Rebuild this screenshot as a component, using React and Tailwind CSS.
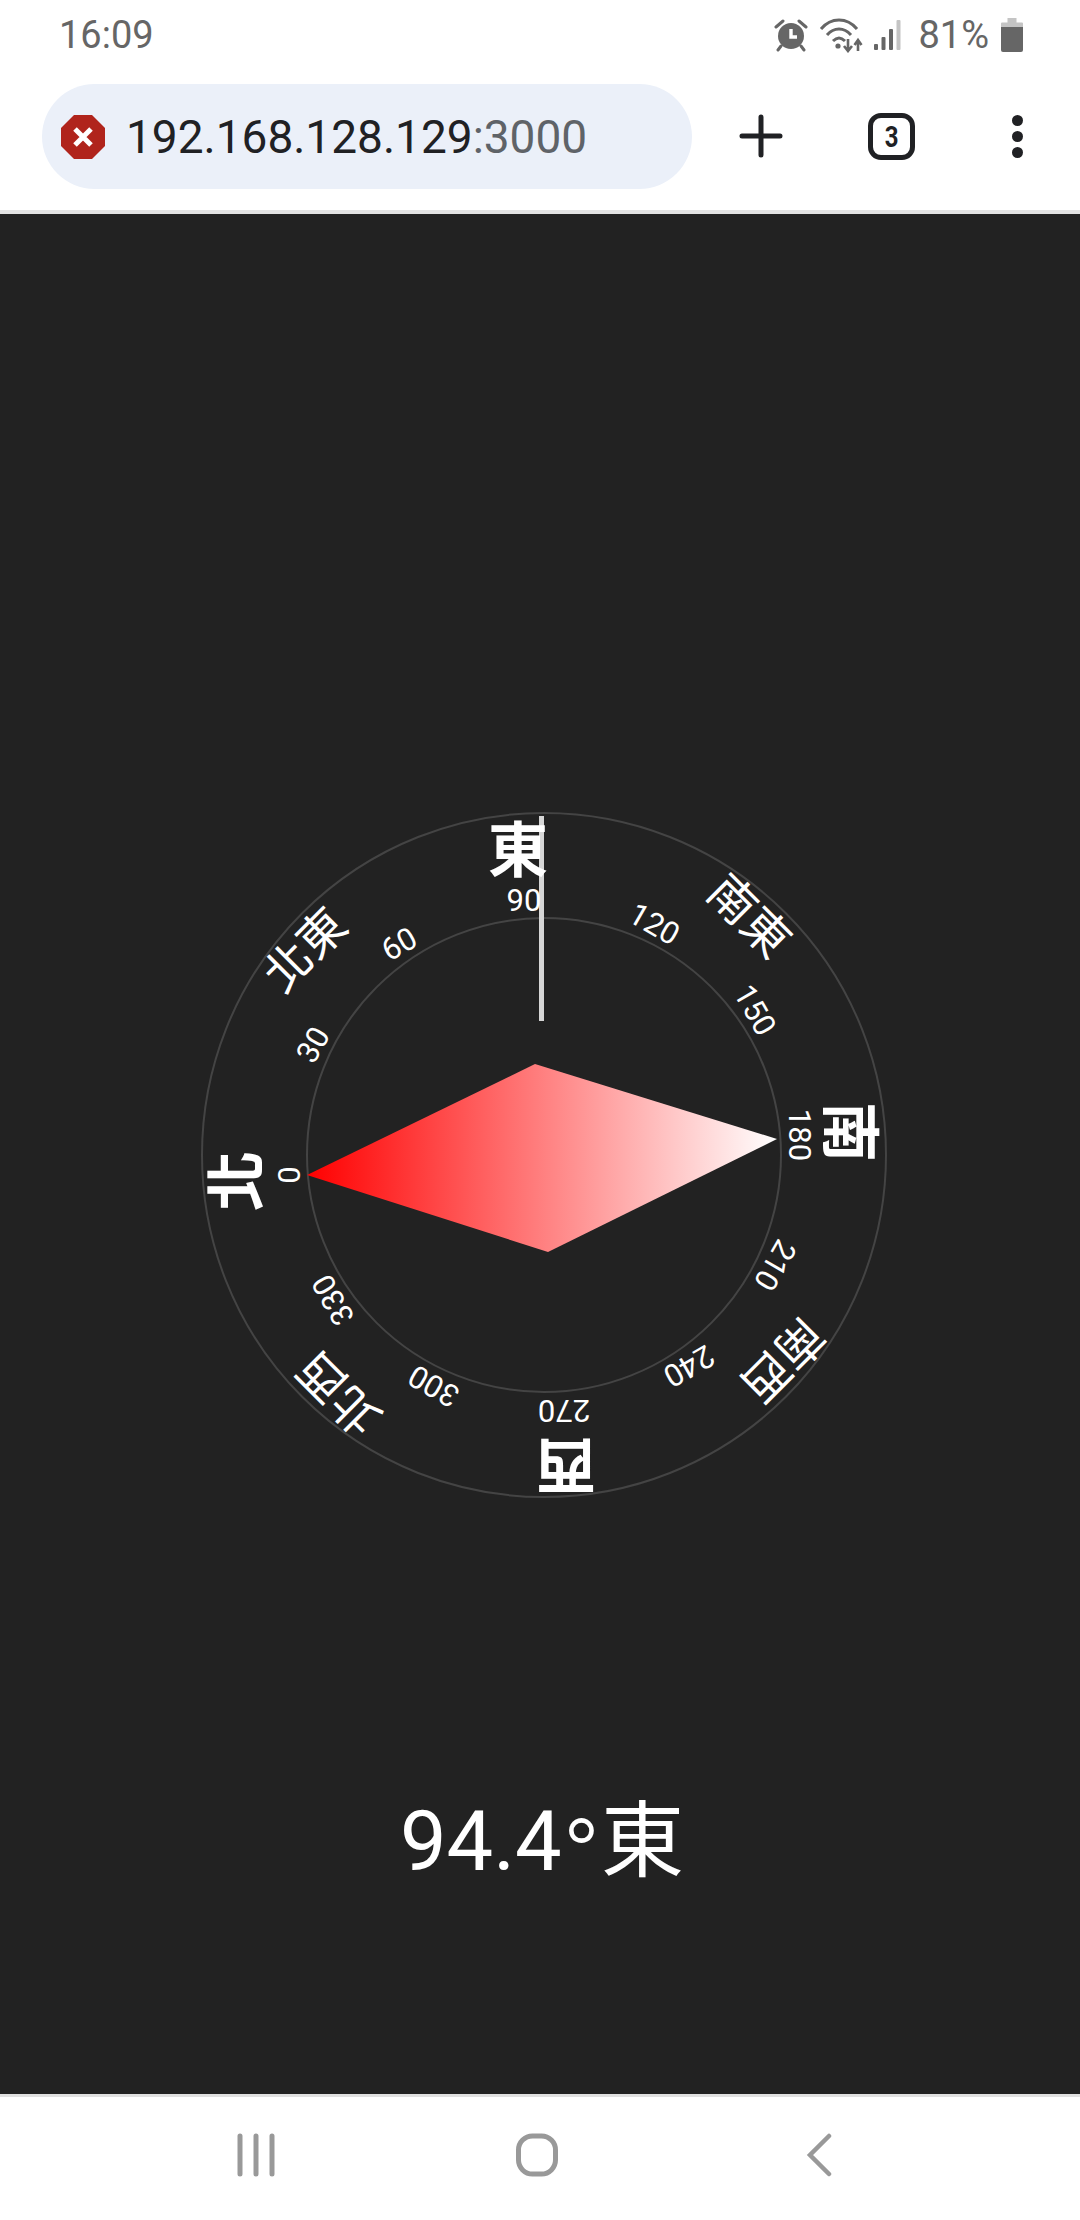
import React from "react";

// d = compass degree, labels are rotated around the dial centre
const MAJOR = [
  { text: "北", d: 0, r: 306, x: -26 },
  { text: "東", d: 90, r: 303, x: -26 },
  { text: "南", d: 180, r: 304, x: -23 },
  { text: "西", d: 270, r: 309, x: -22 },
];
const MINOR = [
  { text: "北東", d: 45 },
  { text: "南東", d: 135 },
  { text: "南西", d: 225 },
  { text: "北西", d: 315 },
];
const TICKS = [0, 30, 60, 90, 120, 150, 180, 210, 240, 270, 300, 330];

const Label = ({ d, r, x = -22, className, children }) => (
  <span
    className={`absolute left-1/2 top-1/2 whitespace-nowrap leading-none text-white ${className}`}
    style={{
      transform: `translate(-50%, -50%) rotate(${d - 90}deg) translate(${x}px, ${-r}px)`,
    }}
  >
    {children}
  </span>
);

const StatusIcons = () => (
  <div className="flex items-center">
    <svg width="34" height="34" viewBox="0 0 34 34" className="text-[#666666]">
      <circle cx="17" cy="18" r="13" fill="currentColor" />
      <path d="M17 11v8h6" fill="none" stroke="#fff" strokeWidth="3.4" />
      <path d="M2 9l7-6M32 9l-7-6M7 28l-3 4M27 28l3 4" stroke="currentColor" strokeWidth="3" strokeLinecap="round" />
    </svg>
    <svg width="44" height="36" viewBox="0 0 44 36" className="ml-[11px] text-[#666666]">
      <path d="M2 12c10-12 26-12 36 0M8 18c7-8 17-8 24 0M14 24c4-4 8-4 12 0" fill="none" stroke="currentColor" strokeWidth="3" />
      <circle cx="19" cy="29" r="2.6" fill="currentColor" />
      <path d="M29 22v11M25 29l4 5 4-5M39 34V24M35.500 28l3.500-5 3.500 5" fill="none" stroke="currentColor" strokeWidth="2.600" />
    </svg>
    <svg width="28" height="32" viewBox="0 0 28 32" className="ml-[10px]">
      <rect x="1" y="25" width="4" height="6" rx="1" fill="#666666" />
      <rect x="8.500" y="18" width="4" height="13" rx="1" fill="#666666" />
      <rect x="16" y="10" width="4" height="21" rx="1" fill="#666666" />
      <rect x="23.500" y="1" width="4" height="30" rx="1" fill="#c4c4c4" />
    </svg>
    <span className="ml-[17px] text-[38px] leading-none text-[#666666]">81%</span>
    <svg width="22" height="34" viewBox="0 0 22 34" className="ml-[12px]">
      <path d="M6.500 0h9v4.500h5.500a1 1 0 0 1 1 1V9H0V5.500a1 1 0 0 1 1-1h5.500z" fill="#c4c4c4" />
      <path d="M0 9h22v23a2 2 0 0 1-2 2H2a2 2 0 0 1-2-2z" fill="#666666" />
    </svg>
  </div>
);

const ErrorIcon = () => (
  <svg width="46" height="46" viewBox="0 0 46 46">
    <path d="M14 1h18l13 13v18L32 45H14L1 32V14z" fill="#b0241c" />
    <path d="M15 15l16 16M31 15L15 31" stroke="#fff" strokeWidth="5" />
  </svg>
);

const Dial = () => (
  <div className="relative ml-2 h-[686px] w-[686px] rounded-full border-2 border-[#444444]">
    <div className="absolute left-[103px] top-[103px] h-[476px] w-[476px] rounded-full border-2 border-[#444444]" />
    <svg
      className="absolute -left-[2px] -top-[2px]"
      width="686"
      height="686"
      viewBox="0 0 686 686"
    >
      <defs>
        <linearGradient id="needle" x1="0" y1="0" x2="1" y2="0">
          <stop offset="0" stopColor="#ff0000" />
          <stop offset="1" stopColor="#ffffff" />
        </linearGradient>
      </defs>
      <polygon points="106,363 334,252 576,327 347,440" fill="url(#needle)" />
    </svg>
    <div className="absolute left-[336px] top-[2px] h-[205px] w-[5px] bg-[#d6d6d6]" />
    {TICKS.map((d) => (
      <Label key={d} d={d} r={255} x={-20} className="text-[31px]">
        {d}
      </Label>
    ))}
    {MINOR.map((m) => (
      <Label key={m.d} d={m.d} r={314} x={-24} className="text-[47px]">
        {m.text}
      </Label>
    ))}
    {MAJOR.map((m) => (
      <Label key={m.d} d={m.d} r={m.r} x={m.x} className="text-[60px] font-bold">
        {m.text}
      </Label>
    ))}
  </div>
);

export default function App() {
  return (
    <div className="flex h-[2220px] w-[1080px] flex-col overflow-hidden bg-white font-[Roboto,'Noto_Sans_CJK_TC',sans-serif]">
      <div className="flex h-[68px] items-center justify-between pl-[59px] pr-[57px] pt-[2px]">
        <span className="text-[38px] leading-none text-[#666666]">16:09</span>
        <StatusIcons />
      </div>

      <div className="flex h-[142px] items-start pl-[42px] pt-[16px]">
        <div className="flex h-[105px] w-[650px] items-center rounded-full bg-[#ebf0f9] pl-[18px]">
          <ErrorIcon />
          <span className="ml-[20px] text-[46px] leading-none text-[#202124]">
            192.168.128.129<span className="text-[#5f6368]">:3000</span>
          </span>
        </div>
        <svg width="44" height="44" viewBox="0 0 44 44" className="ml-[47px] mt-[30px]">
          <path d="M22 3v38M3 22h38" stroke="#202124" strokeWidth="5" strokeLinecap="round" />
        </svg>
        <div className="ml-[85px] mt-[29px] flex h-[47px] w-[47px] items-center justify-center rounded-[13px] border-[5px] border-[#202124] text-[30px] font-bold leading-none text-[#202124]">
          <span className="scale-x-[0.8]">3</span>
        </div>
        <div className="ml-[97px] mt-[31px] flex flex-col gap-[5px]">
          <div className="h-[11px] w-[11px] rounded-full bg-[#202124]" />
          <div className="h-[11px] w-[11px] rounded-full bg-[#202124]" />
          <div className="h-[11px] w-[11px] rounded-full bg-[#202124]" />
        </div>
      </div>

      <div className="h-[4px] bg-[#e3e3e3]" />

      <div className="flex h-[1880px] flex-col items-center bg-[#222222] pt-[598px]">
        <Dial />
        <div className="ml-[4px] mt-[285px] h-[83px] whitespace-nowrap text-[83px] leading-none text-white">
          94.4<span className="inline-block translate-y-[23px] text-[104px] font-light leading-none">°</span>東
        </div>
      </div>

      <div className="h-[3px] bg-[#e0e0e0]" />

      <div className="flex flex-1 items-start pl-[236px] pt-[36px]">
        <svg width="40" height="44" viewBox="0 0 40 44">
          <path d="M4 3v38M20 3v38M36 3v38" stroke="#999999" strokeWidth="5" strokeLinecap="round" />
        </svg>
        <svg width="44" height="44" viewBox="0 0 44 44" className="ml-[239px]">
          <rect x="3.500" y="3" width="37" height="38" rx="14" fill="none" stroke="#999999" strokeWidth="5" />
        </svg>
        <svg width="28" height="44" viewBox="0 0 28 44" className="ml-[246px]">
          <path d="M24 3L5 22l19 19" fill="none" stroke="#999999" strokeWidth="4.500" strokeLinecap="round" />
        </svg>
      </div>
    </div>
  );
}
